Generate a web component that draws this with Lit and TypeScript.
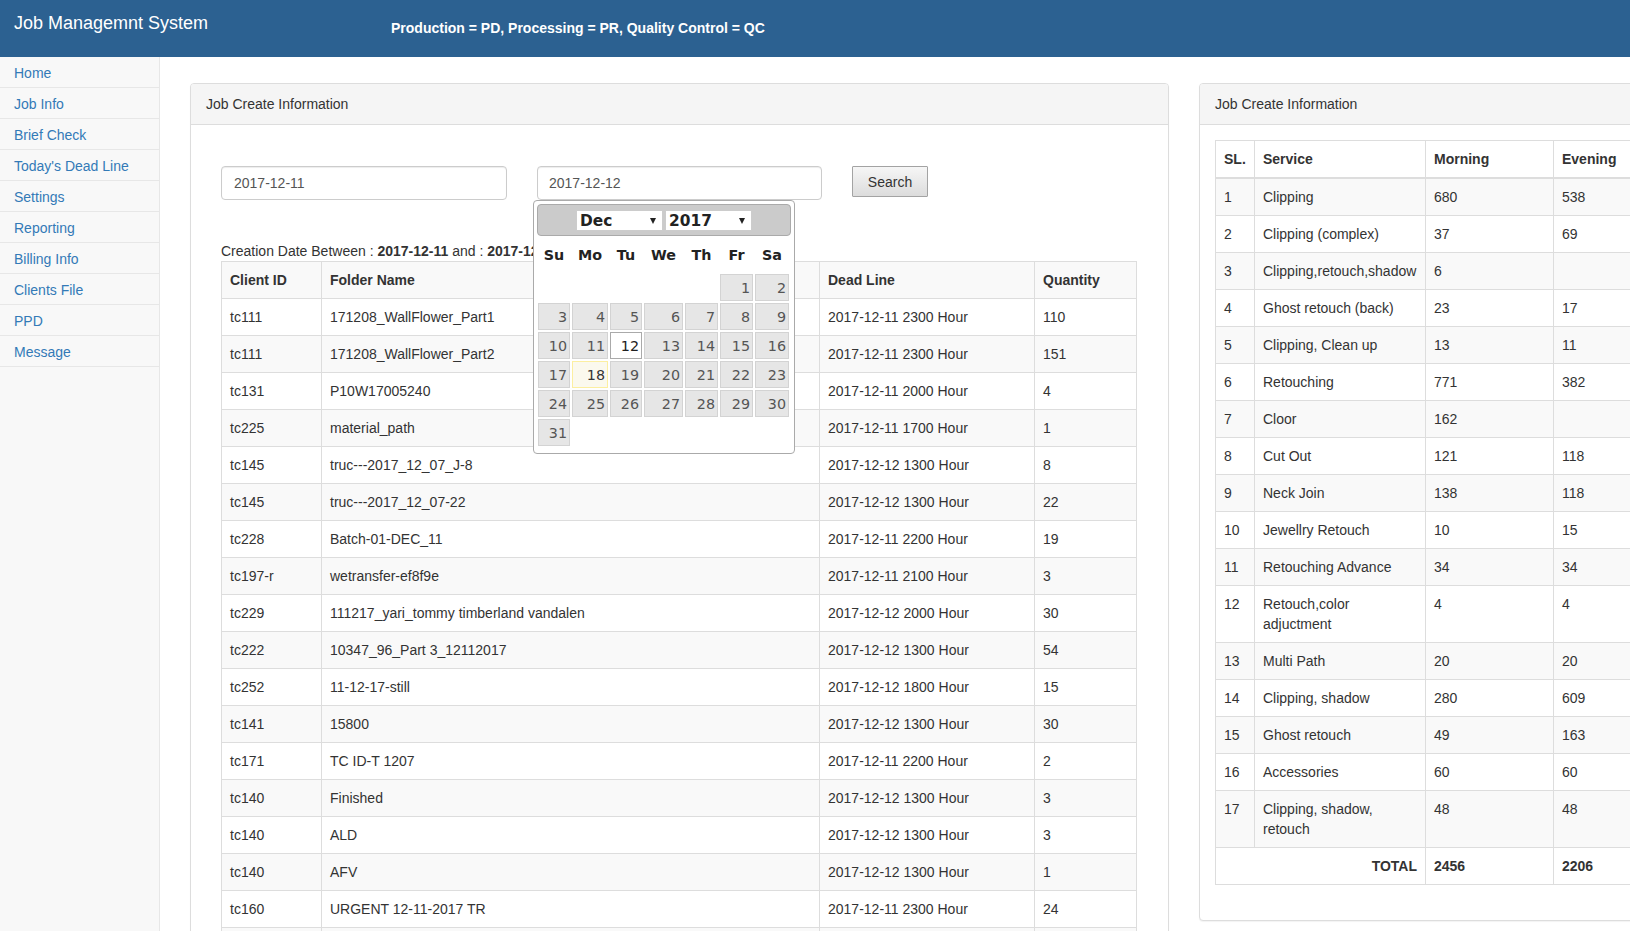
import { LitElement, html, css } from "lit";
import { customElement } from "lit/decorators.js";

const NAV = ["Home", "Job Info", "Brief Check", "Today's Dead Line", "Settings", "Reporting", "Billing Info", "Clients File", "PPD", "Message"];

const JOBS: string[][] = [
  ["tc111", "171208_WallFlower_Part1", "2017-12-11 2300 Hour", "110"],
  ["tc111", "171208_WallFlower_Part2", "2017-12-11 2300 Hour", "151"],
  ["tc131", "P10W17005240", "2017-12-11 2000 Hour", "4"],
  ["tc225", "material_path", "2017-12-11 1700 Hour", "1"],
  ["tc145", "truc---2017_12_07_J-8", "2017-12-12 1300 Hour", "8"],
  ["tc145", "truc---2017_12_07-22", "2017-12-12 1300 Hour", "22"],
  ["tc228", "Batch-01-DEC_11", "2017-12-11 2200 Hour", "19"],
  ["tc197-r", "wetransfer-ef8f9e", "2017-12-11 2100 Hour", "3"],
  ["tc229", "111217_yari_tommy timberland vandalen", "2017-12-12 2000 Hour", "30"],
  ["tc222", "10347_96_Part 3_12112017", "2017-12-12 1300 Hour", "54"],
  ["tc252", "11-12-17-still", "2017-12-12 1800 Hour", "15"],
  ["tc141", "15800", "2017-12-12 1300 Hour", "30"],
  ["tc171", "TC ID-T 1207", "2017-12-11 2200 Hour", "2"],
  ["tc140", "Finished", "2017-12-12 1300 Hour", "3"],
  ["tc140", "ALD", "2017-12-12 1300 Hour", "3"],
  ["tc140", "AFV", "2017-12-12 1300 Hour", "1"],
  ["tc160", "URGENT 12-11-2017 TR", "2017-12-11 2300 Hour", "24"],
  ["\u00a0", "", "", ""],
];

const SERVICES: string[][] = [
  ["1", "Clipping", "680", "538"],
  ["2", "Clipping (complex)", "37", "69"],
  ["3", "Clipping,retouch,shadow", "6", ""],
  ["4", "Ghost retouch (back)", "23", "17"],
  ["5", "Clipping, Clean up", "13", "11"],
  ["6", "Retouching", "771", "382"],
  ["7", "Cloor", "162", ""],
  ["8", "Cut Out", "121", "118"],
  ["9", "Neck Join", "138", "118"],
  ["10", "Jewellry Retouch", "10", "15"],
  ["11", "Retouching Advance", "34", "34"],
  ["12", "Retouch,color adjuctment", "4", "4"],
  ["13", "Multi Path", "20", "20"],
  ["14", "Clipping, shadow", "280", "609"],
  ["15", "Ghost retouch", "49", "163"],
  ["16", "Accessories", "60", "60"],
  ["17", "Clipping, shadow, retouch", "48", "48"],
];

const WEEKS: (number | null)[][] = [
  [null, null, null, null, null, 1, 2],
  [3, 4, 5, 6, 7, 8, 9],
  [10, 11, 12, 13, 14, 15, 16],
  [17, 18, 19, 20, 21, 22, 23],
  [24, 25, 26, 27, 28, 29, 30],
  [31, null, null, null, null, null, null],
];

@customElement("app-root")
export class AppRoot extends LitElement {
  static styles = css`
    :host {
      display: block;
      width: 1630px;
      height: 931px;
      overflow: hidden;
      background: #fff;
      color: #333;
      font: 14px/20px "Liberation Sans", Arial, sans-serif;
    }
    * { box-sizing: border-box; }
    .topbar {
      height: 57px;
      background: #2c6191;
      color: #fff;
      display: flex;
      align-items: flex-start;
    }
    .brand {
      width: 391px;
      padding: 13px 0 0 14px;
      font-size: 18px;
      line-height: 20px;
    }
    .legend {
      padding-top: 18px;
      font-weight: bold;
    }
    .page {
      display: flex;
      height: 874px;
    }
    .side {
      flex: none;
      width: 160px;
      background: #f8f8f8;
      border-right: 1px solid #e7e7e7;
    }
    .side a {
      display: block;
      padding: 6px 14px 4px;
      height: 31px;
      color: #337ab7;
      text-decoration: none;
      border-bottom: 1px solid #e7e7e7;
    }
    .main {
      flex: none;
      display: flex;
      align-items: flex-start;
      gap: 30px;
      padding: 26px 0 0 30px;
    }
    .panel {
      flex: none;
      background: #fff;
      border: 1px solid #ddd;
      border-radius: 4px;
      box-shadow: 0 1px 1px rgba(0, 0, 0, 0.05);
    }
    .panel-left { width: 979px; }
    .panel-right { width: 498px; }
    .heading {
      padding: 10px 15px;
      background: #f5f5f5;
      border-bottom: 1px solid #ddd;
      border-radius: 3px 3px 0 0;
    }
    .body-left { padding: 41px 30px 0; }
    .body-right { padding: 15px 15px 35px; }
    .filters {
      display: flex;
      align-items: flex-start;
    }
    .filters input {
      display: block;
      height: 34px;
      padding: 6px 12px;
      font: inherit;
      color: #555;
      background: #fff;
      border: 1px solid #ccc;
      border-radius: 4px;
      box-shadow: inset 0 1px 1px rgba(0, 0, 0, 0.075);
    }
    .filters input.from { width: 286px; }
    .filters input.to { width: 285px; padding-left: 11px; }
    .to-wrap {
      position: relative;
      margin-left: 30px;
    }
    .btn {
      width: 76px;
      height: 31px;
      margin-left: 30px;
      padding: 0;
      font: inherit;
      color: #333;
      background: linear-gradient(#f6f6f6, #dcdcdc);
      border: 1px solid #a3a3a3;
      border-radius: 1px;
    }
    .range {
      margin-top: 41px;
      height: 20px;
    }
    table.grid {
      width: 916px;
      table-layout: fixed;
      border-collapse: collapse;
      background: #fff;
    }
    .grid th, .grid td {
      padding: 8px;
      border: 1px solid #ddd;
      text-align: left;
      vertical-align: top;
      line-height: 20px;
    }
    .jobs tr:nth-child(odd) { background: #f9f9f9; }
    .jobs .c1 { width: 100px; }
    .jobs .c2 { width: 498px; }
    .jobs .c3 { width: 215px; }
    .services thead th { border-bottom-width: 2px; }
    .services tbody tr:nth-child(odd) { background: #f9f9f9; }
    .services tfoot td { font-weight: bold; }
    .services tfoot .total { text-align: right; }
    table.services { width: 466px; }
    .services .c1 { width: 39px; }
    .services .c2 { width: 171px; }
    .services .c3 { width: 128px; }
    .services .c4 { width: 128px; }

    .cal {
      position: absolute;
      left: -4px;
      top: 34px;
      z-index: 5;
      width: 262px;
      padding: 3px 3px 6px;
      background: #fff;
      border: 1px solid #aaa;
      border-radius: 4px;
      font-family: "DejaVu Sans", Verdana, sans-serif;
      font-size: 14.3px;
    }
    .cal-head {
      height: 32px;
      display: flex;
      justify-content: center;
      align-items: center;
      gap: 2px;
      background: #cbcbcb;
      border: 1px solid #aaa;
      border-radius: 4px;
    }
    .pick {
      position: relative;
      width: 87px;
      height: 21px;
    }
    .pick select {
      appearance: none;
      display: block;
      width: 100%;
      height: 100%;
      margin: 0;
      padding: 1px 0 0 3px;
      font: bold 15.4px/19px "DejaVu Sans", Verdana, sans-serif;
      color: #222;
      background: #fff;
      border: 1px solid #ccc;
      border-radius: 0;
    }
    .pick::after {
      content: "";
      position: absolute;
      right: 7px;
      top: 8px;
      border-left: 3px solid transparent;
      border-right: 3px solid transparent;
      border-top: 6px solid #222;
    }
    .cal table {
      width: 253px;
      table-layout: fixed;
      border-collapse: collapse;
    }
    .cal th {
      height: 37px;
      padding: 0;
      font-weight: bold;
      color: #222;
      text-align: center;
    }
    .cal td { padding: 1px; }
    .cal .w0 { width: 34px; }
    .cal .w1 { width: 38px; }
    .cal .w2 { width: 34px; }
    .cal .w3 { width: 41px; }
    .cal .w4 { width: 35px; }
    .cal .w5 { width: 35px; }
    .cal .w6 { width: 36px; }
    .day {
      display: block;
      height: 27px;
      padding: 1px 2px 0 0;
      line-height: 25px;
      text-align: right;
      color: #555;
      background: #e6e6e6;
      border: 1px solid #d3d3d3;
    }
    .day.today {
      color: #363636;
      background: #fbf9ee;
      border-color: #fcefa1;
    }
    .day.active {
      color: #212121;
      background: #fff;
      border-color: #aaa;
    }
  `;

  private day(d: number | null) {
    if (d === null) return html`<td></td>`;
    const cls = d === 18 ? "day today" : d === 12 ? "day active" : "day";
    return html`<td><span class=${cls}>${d}</span></td>`;
  }

  render() {
    return html`
      <header class="topbar">
        <div class="brand">Job Managemnt System</div>
        <div class="legend">Production = PD, Processing = PR, Quality Control = QC</div>
      </header>
      <div class="page">
        <nav class="side">${NAV.map((n) => html`<a href="#">${n}</a>`)}</nav>
        <main class="main">
          <section class="panel panel-left">
            <div class="heading">Job Create Information</div>
            <div class="body-left">
              <div class="filters">
                <input class="from" value="2017-12-11" />
                <div class="to-wrap">
                  <input class="to" value="2017-12-12" />
                  <div class="cal">
                    <div class="cal-head">
                      <div class="pick"><select><option>Dec</option></select></div>
                      <div class="pick"><select><option>2017</option></select></div>
                    </div>
                    <table>
                      <thead>
                        <tr>
                          ${["Su", "Mo", "Tu", "We", "Th", "Fr", "Sa"].map(
                            (d, i) => html`<th class="w${i}">${d}</th>`
                          )}
                        </tr>
                      </thead>
                      <tbody>
                        ${WEEKS.map((w) => html`<tr>${w.map((d) => this.day(d))}</tr>`)}
                      </tbody>
                    </table>
                  </div>
                </div>
                <button class="btn">Search</button>
              </div>
              <div class="range">Creation Date Between : <b>2017-12-11</b> and : <b>2017-12-12</b></div>
              <table class="grid jobs">
                <tbody>
                  <tr>
                    <th class="c1">Client ID</th>
                    <th class="c2">Folder Name</th>
                    <th class="c3">Dead Line</th>
                    <th>Quantity</th>
                  </tr>
                  ${JOBS.map((r) => html`<tr>${r.map((c) => html`<td>${c}</td>`)}</tr>`)}
                </tbody>
              </table>
            </div>
          </section>
          <section class="panel panel-right">
            <div class="heading">Job Create Information</div>
            <div class="body-right">
              <table class="grid services">
                <thead>
                  <tr>
                    <th class="c1">SL.</th>
                    <th class="c2">Service</th>
                    <th class="c3">Morning</th>
                    <th class="c4">Evening</th>
                  </tr>
                </thead>
                <tbody>
                  ${SERVICES.map((r) => html`<tr>${r.map((c) => html`<td>${c}</td>`)}</tr>`)}
                </tbody>
                <tfoot>
                  <tr>
                    <td class="total" colspan="2">TOTAL</td>
                    <td>2456</td>
                    <td>2206</td>
                  </tr>
                </tfoot>
              </table>
            </div>
          </section>
        </main>
      </div>
    `;
  }
}
